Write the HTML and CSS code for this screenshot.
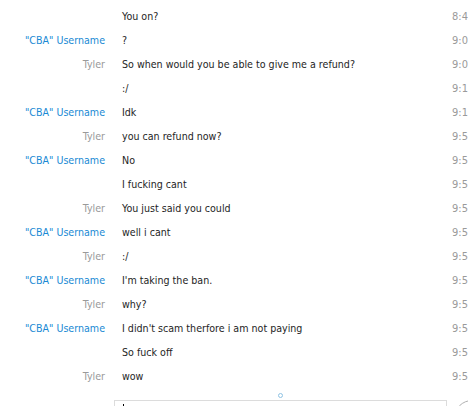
FILE: index.html
```html
<!DOCTYPE html>
<html>
<head>
<meta charset="utf-8">
<link rel="stylesheet" href="styles.css">
</head>
<body>
<div class="chat">
  <div class="row"><span class="name"></span><span class="msg">You on?</span><span class="time">8:4</span></div>
  <div class="row"><span class="name cba">"CBA" Username</span><span class="msg">?</span><span class="time">9:0</span></div>
  <div class="row"><span class="name ty">Tyler</span><span class="msg">So when would you be able to give me a refund?</span><span class="time">9:0</span></div>
  <div class="row"><span class="name"></span><span class="msg">:/</span><span class="time">9:1</span></div>
  <div class="row"><span class="name cba">"CBA" Username</span><span class="msg">Idk</span><span class="time">9:1</span></div>
  <div class="row"><span class="name ty">Tyler</span><span class="msg">you can refund now?</span><span class="time">9:5</span></div>
  <div class="row"><span class="name cba">"CBA" Username</span><span class="msg">No</span><span class="time">9:5</span></div>
  <div class="row"><span class="name"></span><span class="msg">I fucking cant</span><span class="time">9:5</span></div>
  <div class="row"><span class="name ty">Tyler</span><span class="msg">You just said you could</span><span class="time">9:5</span></div>
  <div class="row"><span class="name cba">"CBA" Username</span><span class="msg">well i cant</span><span class="time">9:5</span></div>
  <div class="row"><span class="name ty">Tyler</span><span class="msg">:/</span><span class="time">9:5</span></div>
  <div class="row"><span class="name cba">"CBA" Username</span><span class="msg">I'm taking the ban.</span><span class="time">9:5</span></div>
  <div class="row"><span class="name ty">Tyler</span><span class="msg">why?</span><span class="time">9:5</span></div>
  <div class="row"><span class="name cba">"CBA" Username</span><span class="msg">I didn't scam therfore i am not paying</span><span class="time">9:5</span></div>
  <div class="row"><span class="name"></span><span class="msg">So fuck off</span><span class="time">9:5</span></div>
  <div class="row"><span class="name ty">Tyler</span><span class="msg">wow</span><span class="time">9:5</span></div>
</div>
<div class="bottom">
  <div class="dot"></div>
  <div class="inputrow">
    <div class="input"><span class="caret"></span></div>
    <div class="roundbtn"></div>
  </div>
</div>
</body>
</html>
```
FILE: styles.css
```css
html, body {
  margin: 0;
  padding: 0;
  background: #fff;
  width: 468px;
  height: 406px;
  overflow: hidden;
}
body {
  font-family: "DejaVu Sans", sans-serif;
  font-stretch: condensed;
  font-size: 10.6px;
  color: #1e1e1e;
}
.chat {
  padding-top: 4px;
}
.row {
  display: grid;
  grid-template-columns: 106px 346px 40px;
  height: 24px;
  align-items: center;
}
.name {
  text-align: right;
  padding-right: 1px;
}
.msg {
  padding-left: 16px;
  white-space: nowrap;
}
.cba { color: #1a8ad4; }
.ty { color: #9a9a9a; }
.time {
  color: #9a9a9a;
  white-space: nowrap;
  font-size: 11px;
}
.bottom {
  height: 22px;
  overflow: hidden;
}
.dot {
  width: 3px;
  height: 3px;
  border: 1px solid #8fc3e3;
  border-radius: 50%;
  margin: 5px 0 0 278px;
}
.inputrow {
  display: flex;
  margin-top: 2px;
  margin-left: 114px;
}
.input {
  flex: none;
  width: 333px;
  height: 20px;
  border: 1px solid #dcdcdc;
  box-sizing: border-box;
  position: relative;
}
.caret {
  position: absolute;
  left: 8px;
  top: 3px;
  width: 1px;
  height: 10px;
  background: #000;
}
.roundbtn {
  flex: none;
  width: 36px;
  height: 36px;
  border: 1px solid #b0b0b0;
  border-radius: 50%;
  margin-left: 7px;
  box-sizing: border-box;
}
```
